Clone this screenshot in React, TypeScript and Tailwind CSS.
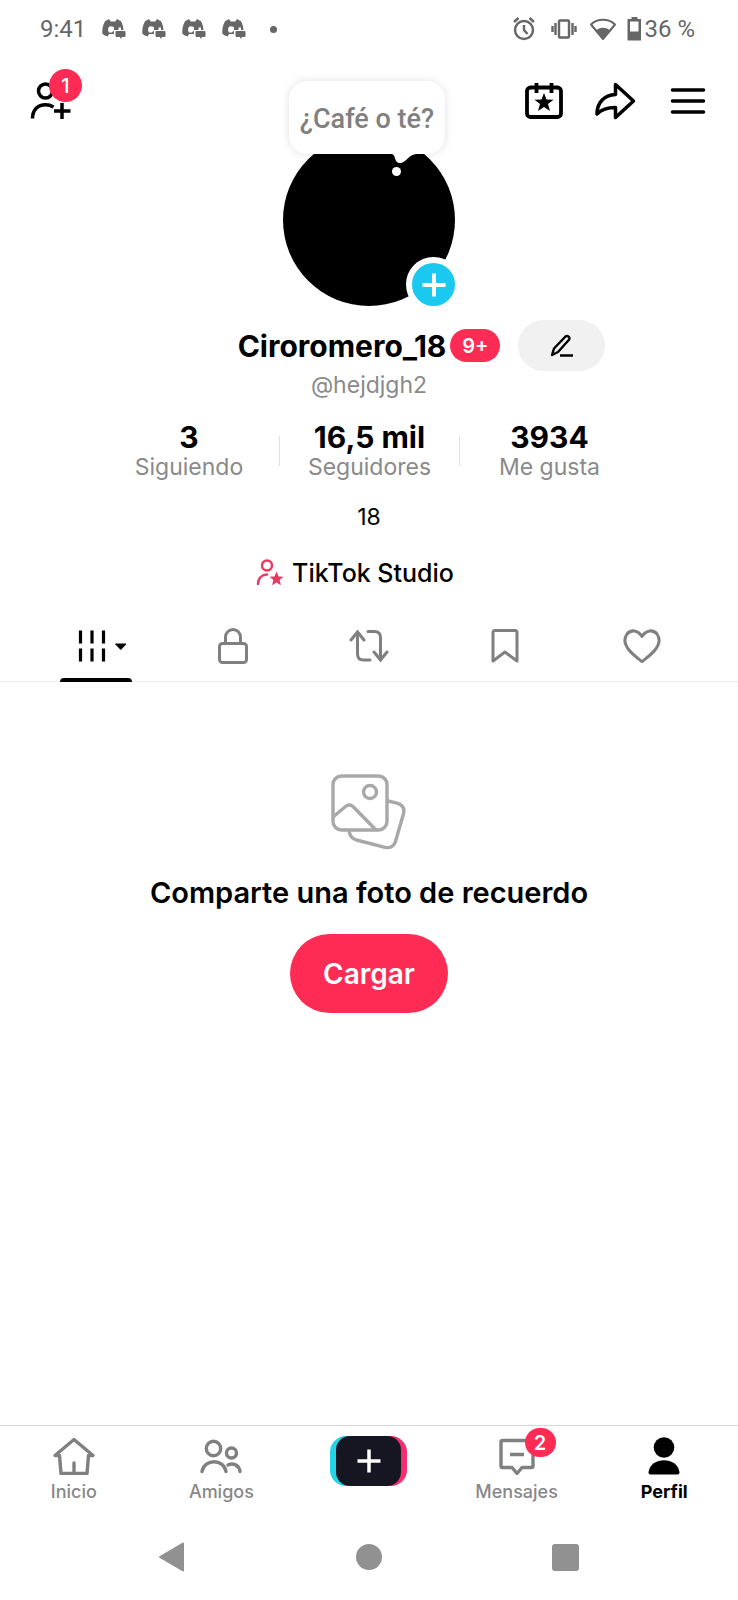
import type { ReactNode } from 'react';

const stats = [
    { value: '3', label: 'Siguiendo' },
    { value: '16,5 mil', label: 'Seguidores' },
    { value: '3934', label: 'Me gusta' },
];

const DiscordIcon = () => (
    <svg width="24" height="21" viewBox="0 0 24 21" fill="#666666">
        <path
            fillRule="evenodd"
            d="M8 1 6.500.3 3 2.200C1 5.500 0 10 .3 14.500c1.700 1.700 3.500 2.600 5.200 3l1.600-2.500H12V11h4.500V8.500H19V11h2.500C21.300 7.500 20.300 4.500 19 2.200L15.500.3 14 1 13.500 2.500h-5Z M8.800 7.200 12 8v3.500l-2 2H7l-1-2.300.6-3.200Z"
        />
        <path d="M14.500 12h8a1 1 0 0 1 1 1v4a1 1 0 0 1-1 1H20l-1 2.200L18 18h-3.500a1 1 0 0 1-1-1v-4a1 1 0 0 1 1-1Z" />
    </svg>
);

const StatusBar = () => (
    <div className="flex h-14 items-center justify-between pl-10 pr-[43px] pt-0.5 font-['Roboto',sans-serif] text-[24px] text-[#666666]">
        <div className="flex items-center">
            <span>9:41</span>
            <div className="ml-4 flex gap-4">
                <DiscordIcon />
                <DiscordIcon />
                <DiscordIcon />
                <DiscordIcon />
            </div>
            <span className="ml-6 size-[7px] rounded-full bg-[#666666]" />
        </div>
        <div className="flex items-center">
            <svg width="22" height="24" viewBox="0 0 22 24" fill="none" stroke="#666666" strokeWidth="2.400">
                <circle cx="11" cy="13" r="9" />
                <path d="M11 8v5l3.500 4M1 5l4.500-4M21 5l-4.500-4" />
            </svg>
            <svg className="ml-4" width="26" height="20" viewBox="0 0 26 20" fill="none" stroke="#666666" strokeWidth="2.400">
                <rect x="8" y="1.500" width="10" height="17" rx="1" />
                <path d="M4.500 4v12M1.500 7v6M21.500 4v12M24.500 7v6" />
            </svg>
            <svg className="ml-3" width="28" height="23" viewBox="0 0 28 23" fill="none" stroke="#666666" strokeWidth="2">
                <path d="M14 21 2 6.500C8.500.3 19.500.3 26 6.500Z" strokeLinejoin="round" />
                <path d="M7.500 12c4-3 9-3 13 0L14 21Z" fill="#666666" stroke="none" />
            </svg>
            <svg className="ml-2.5" width="15" height="24" viewBox="0 0 15 24" fill="#666666">
                <path d="M4.500 0h6v2H14v21.500H.5V2h4ZM3 4.500v10h8.500v-10Z" fillRule="evenodd" />
            </svg>
            <span className="ml-0.5">36 %</span>
        </div>
    </div>
);

const Header = () => (
    <header className="flex h-[78px] items-center justify-between pl-[30px] pr-8 pt-3">
        <button type="button" aria-label="Añadir amigos" className="relative">
            <svg width="42" height="40" viewBox="0 0 42 40" fill="none" stroke="#000" strokeWidth="3.500">
                <circle cx="15.500" cy="10" r="7" />
                <path d="M2.500 37.500C2.500 28.500 8 23.800 15.500 23.800c3 0 5.500.700 8 2.200M24 30h16.500M32 22v16" />
            </svg>
            <span className="absolute -top-3 left-[19px] flex size-[33px] items-center justify-center rounded-full bg-[#fe2c55] text-[20px] font-medium text-white">
                1
            </span>
        </button>
        <div className="flex items-center gap-8">
            <button type="button" aria-label="Calendario">
                <svg width="38" height="38" viewBox="0 0 38 38" fill="none" stroke="#000" strokeWidth="3.800">
                    <rect x="2" y="5.500" width="34" height="29.500" rx="3.500" />
                    <path d="M11.500 1v10M26.500 1v10" />
                    <path
                        d="m19 11 2.500 6.500 7 .2-5.500 4.400 2 6.800-6-4-6 4 2-6.800-5.500-4.400 7-.2Z"
                        fill="#000"
                        stroke="none"
                    />
                </svg>
            </button>
            <button type="button" aria-label="Compartir">
                <svg width="41" height="38" viewBox="0 0 41 38" fill="none" stroke="#000" strokeWidth="3.500" strokeLinejoin="round">
                    <path d="M20.500 2.500 38.500 19 20.500 35.500V25.500C12 25.500 6 28 2 32 2 21 9 13 20.500 12.500Z" />
                </svg>
            </button>
            <button type="button" aria-label="Menú" className="ml-0.5">
                <svg width="36" height="38" viewBox="0 0 36 38" stroke="#000" strokeWidth="3.500" strokeLinecap="round">
                    <path d="M2.500 8h31M2.500 19h31M2.500 30h31" />
                </svg>
            </button>
        </div>
    </header>
);

const Avatar = () => (
    <div className="relative mx-auto size-[172px] rounded-full bg-black">
        {/* Thought bubble above the photo */}
        <div className="absolute -top-[53px] left-1.5 flex h-[73px] w-[156px] items-center justify-center rounded-[18px] bg-white pt-1 font-['Roboto',sans-serif] text-[27px] font-medium whitespace-nowrap text-[#808080] shadow-[0_0_8px_rgba(0,0,0,0.12)]">
            ¿Café o té?
        </div>
        <svg className="absolute left-[106px] top-5" width="30" height="24" viewBox="0 0 30 24" fill="#fff">
            <path d="M3 0c4 1 2 9 8 9 6 0 8-8 16-9Z" />
            <circle cx="7.500" cy="17.500" r="4.500" />
        </svg>
        <button
            type="button"
            aria-label="Crear historia"
            className="absolute -right-1.5 -bottom-1.5 flex size-[55px] items-center justify-center rounded-full border-6 border-white bg-[#1ac8f0]"
        >
            <svg width="24" height="24" viewBox="0 0 24 24" stroke="#fff" strokeWidth="4">
                <path d="M12 .5v23M.5 12h23" />
            </svg>
        </button>
    </div>
);

const Profile = () => (
    <section className="flex flex-col items-center">
        <Avatar />
        <div className="mt-3.5 grid w-full grid-cols-[1fr_auto_1fr] items-center">
            <div className="col-start-2 flex items-center gap-1">
                <h1 className="text-[30px] leading-10 font-bold">Ciroromero_18</h1>
                <span className="flex h-[33px] w-[50px] items-center justify-center rounded-full bg-[#fe2c55] text-[20px] font-semibold text-white">
                    9+
                </span>
            </div>
            <button
                type="button"
                aria-label="Editar perfil"
                className="ml-[18px] flex h-[51px] w-[87px] items-center justify-center rounded-full bg-[#f1f1f1]"
            >
                <svg width="24" height="24" viewBox="0 0 24 24" fill="none" stroke="#000" strokeWidth="2.400" strokeLinejoin="round">
                    <path d="M2 21 4 14.500 15.500 2.500c2-1.500 5 1 3.500 3.300L8 18Z M10 21.500h13" />
                </svg>
            </button>
        </div>
        <p className="text-[23px] leading-7 text-[#8a8a8a]">@hejdjgh2</p>
        <dl className="mt-[22px] grid grid-cols-3">
            {stats.map((stat, i) => (
                <div key={stat.label} className="flex w-[180px] items-center">
                    {i > 0 && <span className="h-[30px] w-px bg-[#e3e3e3]" />}
                    <div className="flex flex-1 flex-col-reverse text-center">
                        <dt className="text-[23px] leading-7 text-[#8a8a8a]">{stat.label}</dt>
                        <dd className="text-[30px] leading-8 font-bold">{stat.value}</dd>
                    </div>
                </div>
            ))}
        </dl>
        <p className="mt-[22px] text-[23px] leading-7">18</p>
        <a href="#studio" className="mt-7 mr-7 flex items-center gap-2 text-[25px] leading-7 font-medium">
            <svg width="28" height="28" viewBox="0 0 28 28" fill="none" stroke="#e93a60" strokeWidth="2.400" strokeLinecap="round">
                <circle cx="11" cy="6.500" r="5" />
                <path d="M2 25c0-6 4-9.500 9-9.500" />
                <path
                    d="m20.500 12.500 2 5 5 .3-3.900 3.300 1.300 5.200-4.400-2.900-4.400 2.900 1.300-5.200-3.900-3.300 5-.3Z"
                    fill="#e93a60"
                    stroke="none"
                />
            </svg>
            TikTok Studio
        </a>
    </section>
);

const Tab = ({ label, active = false, children }: { label: string; active?: boolean; children: ReactNode }) => (
    <button
        type="button"
        role="tab"
        aria-selected={active}
        aria-label={label}
        className="relative flex flex-1 items-center justify-center"
    >
        {children}
        {active && <span className="absolute bottom-[-1px] h-1 w-[72px] rounded-t-full bg-black" />}
    </button>
);

const Tabs = () => (
    <div role="tablist" className="mt-[23px] flex h-[72px] border-b border-[#ececec] px-7">
        <Tab label="Videos" active>
            <svg className="ml-3" width="50" height="36" viewBox="0 0 50 36" stroke="#000" strokeWidth="3.200">
                <path d="M3.500 2.500v13M15 2.500v13M26.500 2.500v13M3.500 20.500v13M15 20.500v13M26.500 20.500v13" />
                <path d="M38.500 16H49l-5.200 5.500Z" fill="#000" strokeWidth="1" strokeLinejoin="round" />
            </svg>
        </Tab>
        <Tab label="Privados">
            <svg width="32" height="38" viewBox="0 0 32 38" fill="none" stroke="#808080" strokeWidth="3">
                <rect x="2.500" y="16.500" width="27" height="19" rx="3" />
                <path d="M8.500 16.500V10a7.500 7.500 0 0 1 15 0v6.500" />
            </svg>
        </Tab>
        <Tab label="Republicaciones">
            <svg width="40" height="34" viewBox="0 0 40 34" fill="none" stroke="#808080" strokeWidth="3" strokeLinecap="round">
                <path d="M2 11 8.500 3 15 11M8.500 4v21c0 4 2.500 6 6 6H21M19 2.500h6.500c3.500 0 6 2 6 6V30M25 23l6.500 8 6.500-8" />
            </svg>
        </Tab>
        <Tab label="Guardados">
            <svg width="28" height="36" viewBox="0 0 28 36" fill="none" stroke="#808080" strokeWidth="3" strokeLinejoin="round">
                <path d="M2 33V4.500Q2 2.500 4 2.500H24Q26 2.500 26 4.500V33L14 24Z" />
            </svg>
        </Tab>
        <Tab label="Favoritos">
            <svg width="38" height="34" viewBox="0 0 38 34" fill="none" stroke="#808080" strokeWidth="3" strokeLinejoin="round">
                <path d="M19 7.500C15 .5 7.500.5 4 5 .5 10 2 16 6 21c3.500 4.500 8 7.500 13 11.500 5-4 9.500-7 13-11.500 4-5 5.500-11 2-16-3.500-4.500-11-4.500-15 2.500Z" />
            </svg>
        </Tab>
    </div>
);

const EmptyState = () => (
    <section className="flex flex-1 flex-col items-center pt-[92px]">
        <svg width="76" height="76" viewBox="0 0 76 76" fill="none" stroke="#a8a8a8" strokeWidth="3.400">
            <rect x="2" y="2" width="54" height="54" rx="8.500" />
            <circle cx="39" cy="18" r="6.500" />
            <path d="M2 43 14.500 32.500q4-3 8 .5L45 56M57 27l9 2.200q8.500 2.500 6.500 10.500L64.500 67.500q-2.500 7.500-10.500 5.800L25.500 66q-6.500-2-7.500-9" />
        </svg>
        <h2 className="mt-[25px] text-[29px] leading-9 font-semibold">Comparte una foto de recuerdo</h2>
        <button type="button" className="mt-[23px] h-[79px] w-[158px] rounded-full bg-[#fe2c55] text-[28px] font-semibold text-white">
            Cargar
        </button>
    </section>
);

const NavItem = ({ label, active = false, children }: { label: string; active?: boolean; children: ReactNode }) => (
    <a
        href={`#${label.toLowerCase()}`}
        className={`flex flex-1 flex-col items-center gap-1 text-[18px] leading-6 ${active ? 'font-bold text-black' : 'font-medium text-[#888888]'}`}
    >
        <span className="relative flex h-10 items-center">{children}</span>
        {label}
    </a>
);

const BottomNav = () => (
    <nav className="flex h-[89px] border-t border-[#d8d8d8] pt-2.5">
        <NavItem label="Inicio">
            <svg width="42" height="38" viewBox="0 0 42 38" fill="none" stroke="#808080" strokeWidth="3.400" strokeLinecap="round" strokeLinejoin="round">
                <path d="M2 18.500 21 2.500l19 16h-4.500L34 36.500H8L6.500 18.500Z" />
                <path d="M21 26v9" />
            </svg>
        </NavItem>
        <NavItem label="Amigos">
            <svg width="42" height="38" viewBox="0 0 42 38" fill="none" stroke="#808080" strokeWidth="3.400" strokeLinecap="round">
                <circle cx="13.500" cy="11.500" r="7.200" />
                <circle cx="31.500" cy="16" r="5" />
                <path d="M2 34.500C4.500 21.500 23.500 21.500 26 34.500M28 28C33 25.500 39 28 40 34.500" />
            </svg>
        </NavItem>
        <div className="flex flex-1 items-start justify-center">
            <button
                type="button"
                aria-label="Crear"
                className="flex h-[50px] w-[77px] justify-center rounded-2xl bg-linear-to-r from-[#25d3e6] from-50% to-[#f52d6f] to-50%"
            >
                <span className="flex h-full w-[65px] items-center justify-center rounded-[14px] bg-[#161622]">
                    <svg width="24" height="24" viewBox="0 0 24 24" stroke="#fff" strokeWidth="3.500">
                        <path d="M12 .5v23M.5 12h23" />
                    </svg>
                </span>
            </button>
        </div>
        <NavItem label="Mensajes">
            <svg width="36" height="38" viewBox="0 0 36 38" fill="none" stroke="#808080" strokeWidth="3.400" strokeLinejoin="round">
                <path d="M3.500 3.500h29q1.500 0 1.500 1.500v24q0 1.500-1.500 1.500H23L18 36.500 13 30.500H3.500Q2 30.500 2 29V5q0-1.500 1.500-1.500ZM11 17.500h14" />
            </svg>
            <span className="absolute -top-2 left-[26px] flex h-[29px] w-[31px] items-center justify-center rounded-full bg-[#fe2c55] text-[20px] font-semibold text-white">
                2
            </span>
        </NavItem>
        <NavItem label="Perfil" active>
            <svg width="32" height="38" viewBox="0 0 32 38" fill="#000">
                <circle cx="16" cy="10.500" r="10.300" />
                <path d="M.5 35.500C2 19 30 19 31.500 35.500q0 2-2 2h-27q-2 0-2-2Z" />
            </svg>
        </NavItem>
    </nav>
);

const SystemBar = () => (
    <div className="flex h-[86px] items-center justify-center gap-[170px]">
        <button type="button" aria-label="Atrás">
            <svg width="27" height="30" viewBox="0 0 27 30" fill="#919191" stroke="#919191" strokeWidth="2" strokeLinejoin="round">
                <path d="M1 15 24 1.500v27Z" />
            </svg>
        </button>
        <button type="button" aria-label="Pantalla de inicio" className="size-[26px] rounded-full bg-[#919191]" />
        <button type="button" aria-label="Recientes" className="size-[27px] rounded-[3px] bg-[#919191]" />
    </div>
);

export default function App() {
    return (
        <div className="flex min-h-screen flex-col bg-white font-['Inter',sans-serif] text-black">
            <StatusBar />
            <Header />
            <main className="flex flex-1 flex-col">
                <Profile />
                <Tabs />
                <EmptyState />
            </main>
            <BottomNav />
            <SystemBar />
        </div>
    );
}
